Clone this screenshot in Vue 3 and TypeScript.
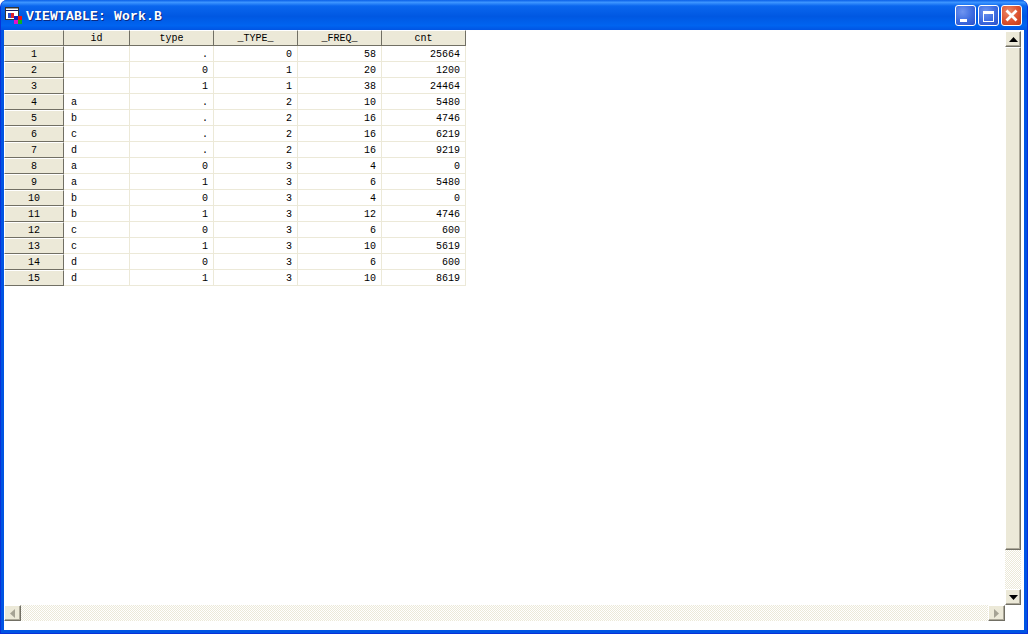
<script setup lang="ts">
const columns: { label: string; cls: string }[] = [
  { label: 'id', cls: 'c-id' },
  { label: 'type', cls: 'c-type' },
  { label: '_TYPE_', cls: 'c-n' },
  { label: '_FREQ_', cls: 'c-n' },
  { label: 'cnt', cls: 'c-n' },
]
const rows: string[][] = [
  ['', '.', '0', '58', '25664'],
  ['', '0', '1', '20', '1200'],
  ['', '1', '1', '38', '24464'],
  ['a', '.', '2', '10', '5480'],
  ['b', '.', '2', '16', '4746'],
  ['c', '.', '2', '16', '6219'],
  ['d', '.', '2', '16', '9219'],
  ['a', '0', '3', '4', '0'],
  ['a', '1', '3', '6', '5480'],
  ['b', '0', '3', '4', '0'],
  ['b', '1', '3', '12', '4746'],
  ['c', '0', '3', '6', '600'],
  ['c', '1', '3', '10', '5619'],
  ['d', '0', '3', '6', '600'],
  ['d', '1', '3', '10', '8619'],
]
</script>

<template>
  <div class="window">
    <header class="titlebar">
      <svg class="appicon" width="17" height="17" viewBox="0 0 17 17">
        <rect x="0.5" y="0.5" width="13" height="12" fill="#fff" stroke="#333" />
        <rect x="1" y="1" width="12" height="1" fill="#9a9a9a" />
        <rect x="1" y="3" width="12" height="1" fill="#1a1a60" />
        <rect x="3" y="6" width="3" height="5" fill="#2a50d0" />
        <rect x="6" y="6" width="3" height="5" fill="#e0202a" />
        <rect x="9" y="9" width="4" height="4" fill="#1020c0" />
        <rect x="13" y="9" width="4" height="4" fill="#f01010" />
        <rect x="9" y="13" width="4" height="4" fill="#e010d0" />
        <rect x="13" y="13" width="4" height="4" fill="#10b020" />
      </svg>
      <span class="title">VIEWTABLE: Work.B</span>
      <div class="controls">
        <button class="ctl">
          <svg width="21" height="21" viewBox="0 0 21 21"><rect x="5" y="14" width="7" height="3" fill="#fff" /></svg>
        </button>
        <button class="ctl">
          <svg width="21" height="21" viewBox="0 0 21 21"><rect x="5.5" y="6.5" width="10" height="10" fill="none" stroke="#fff" /><rect x="5" y="6" width="11" height="3" fill="#fff" /></svg>
        </button>
        <button class="ctl close">
          <svg width="21" height="21" viewBox="0 0 21 21"><path d="M5.5 5.5l10 10M15.5 5.5l-10 10" stroke="#fff" stroke-width="2.8" fill="none" /></svg>
        </button>
      </div>
    </header>

    <div class="client">
      <div class="upper">
        <div class="sheet">
          <div class="grid">
            <div class="hd corner"></div>
            <div v-for="c in columns" :key="c.label" class="hd">{{ c.label }}</div>
            <template v-for="(r, i) in rows" :key="i">
              <div class="hd rowhead">{{ i + 1 }}</div>
              <div v-for="(v, j) in r" :key="j" class="cell" :class="j === 0 ? 'left' : 'right'">{{ v }}</div>
            </template>
          </div>
        </div>
        <div class="vbar">
          <div class="btn btn-v">
            <svg width="9" height="5" viewBox="0 0 9 5"><path d="M4.5 0L9 5H0z" fill="#000" /></svg>
          </div>
          <div class="thumb"></div>
          <div class="track"></div>
          <div class="btn btn-v">
            <svg width="9" height="5" viewBox="0 0 9 5"><path d="M0 0H9L4.5 5z" fill="#000" /></svg>
          </div>
        </div>
      </div>
      <div class="hbar">
        <div class="btn btn-h">
          <svg width="5" height="9" viewBox="0 0 5 9"><path d="M5 0V9L0 4.5z" fill="#a5a294" /></svg>
        </div>
        <div class="track"></div>
        <div class="btn btn-h">
          <svg width="5" height="9" viewBox="0 0 5 9"><path d="M0 0V9L5 4.5z" fill="#a5a294" /></svg>
        </div>
      </div>
    </div>
  </div>
</template>

<style>
html, body { margin: 0; padding: 0; overflow: hidden; }
</style>

<style scoped>
.window {
  width: 1028px;
  height: 634px;
  display: flex;
  flex-direction: column;
  box-sizing: border-box;
  background: #0054e3;
  padding-bottom: 3px;
  font-family: "Liberation Mono", "DejaVu Sans Mono", monospace;
  border-radius: 7px 7px 0 0;
  overflow: hidden;
  border-left: 1px solid #0831d9;
  border-right: 1px solid #0831d9;
  border-bottom: 1px solid #0831d9;
}
.titlebar {
  height: 30px;
  flex: none;
  display: flex;
  align-items: center;
  padding: 0 5px 0 4px;
  background: linear-gradient(180deg, #0a5fe8 0%, #3d95ff 8%, #0a66ee 20%, #0058e2 55%, #0064f0 85%, #0054e3 100%);
}
.appicon { flex: none; margin-top: 1px; }
.title {
  margin-left: 4px;
  margin-top: 2px;
  color: #fff;
  font-size: 13px;
  font-weight: 700;
  letter-spacing: 0.2px;
  text-shadow: 1px 1px 0 #0a2a80;
}
.controls { margin-left: auto; display: flex; gap: 2px; margin-top: 1px; }
.ctl {
  width: 19px;
  height: 19px;
  padding: 0;
  margin: 0;
  border: 1px solid #fff;
  border-radius: 3px;
  box-sizing: content-box;
  background: radial-gradient(circle at 35% 30%, #6f95f0 0%, #3c6be0 55%, #2a4fc8 100%);
  display: block;
  overflow: hidden;
}
.ctl svg { display: block; margin: -1px; }
.close { background: radial-gradient(circle at 35% 30%, #ec8a68 0%, #dc5230 55%, #c03a18 100%); }

.client {
  flex: 1;
  min-height: 0;
  margin: 0 3px;
  background: #fff;
  padding: 0 3px 9px 0;
  display: flex;
  flex-direction: column;
}
.upper { flex: 1; min-height: 0; display: flex; }
.sheet { flex: 1; min-width: 0; }
.grid {
  display: grid;
  grid-template-columns: 60px 66px 84px 84px 84px 84px;
  grid-auto-rows: 16px;
  width: max-content;
  font-size: 10px;
  color: #000;
}
.hd {
  box-sizing: border-box;
  background: #ece9d8;
  border-right: 1px solid #716f64;
  border-bottom: 1px solid #716f64;
  border-top: 1px solid #fff;
  text-align: center;
  line-height: 14px;
  padding-top: 1px;
}
.rowhead { border-left: 1px solid #fff; }
.cell {
  box-sizing: border-box;
  border-right: 1px solid #ece9d8;
  border-bottom: 1px solid #ece9d8;
  overflow: hidden;
  white-space: nowrap;
  line-height: 15px;
  padding-top: 1px;
}
.left { text-align: left; padding-left: 7px; }
.right { text-align: right; padding-right: 5px; }

.vbar {
  flex: none;
  width: 16px;
  padding-top: 1px;
  display: flex;
  flex-direction: column;
}
.hbar { flex: none; height: 16px; display: flex; margin-right: 16px; }
.track {
  flex: 1;
  background: #fff url("data:image/svg+xml,%3Csvg xmlns='http://www.w3.org/2000/svg' width='2' height='2'%3E%3Crect width='2' height='2' fill='%23fff'/%3E%3Crect width='1' height='1' fill='%23ece9d8'/%3E%3Crect x='1' y='1' width='1' height='1' fill='%23ece9d8'/%3E%3C/svg%3E") repeat;
}
.btn, .thumb {
  box-sizing: border-box;
  background: #ece9d8;
  border-top: 1px solid #fff;
  border-left: 1px solid #fff;
  border-right: 1px solid #716f64;
  border-bottom: 1px solid #716f64;
  box-shadow: inset -1px -1px 0 #aca899;
  display: flex;
  align-items: center;
  justify-content: center;
  flex: none;
}
.btn-v { width: 16px; height: 16px; }
.btn-h { width: 17px; height: 16px; }
.thumb { width: 16px; height: 503px; }
</style>
